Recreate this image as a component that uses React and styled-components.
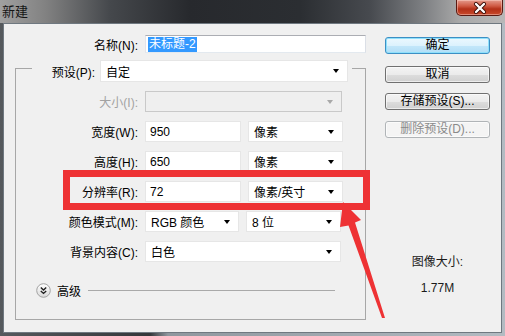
import React from 'react';
import styled, { createGlobalStyle } from 'styled-components';

const FONT = `"Liberation Sans", "Noto Sans CJK SC", sans-serif`;

const Global = createGlobalStyle`
  html, body { margin: 0; padding: 0; }
  body {
    width: 505px; height: 336px; overflow: hidden;
    font-family: ${FONT}; font-size: 12px; color: #000;
  }
  * { box-sizing: border-box; }
`;

const Window = styled.div`
  position: relative;
  width: 505px;
  height: 336px;
  display: flex;
  flex-direction: column;
  background: linear-gradient(to right, #55595d 0px, #34373a 150px, #8f979e 168px, #b3bbc2 505px);
`;

const TitleBar = styled.div`
  flex: none;
  height: 23px;
  display: flex;
  align-items: flex-start;
  justify-content: space-between;
  background: linear-gradient(to right, #a0a0a0 0px, #828282 45px, #45484c 110px, #27292d 190px, #2b2e32 300px, #474a4f 370px, #7f8184 425px, #a9a9a9 460px, #b8b8b8 505px);
`;

const Title = styled.div`
  height: 23px;
  line-height: 23px;
  padding-left: 2px;
  font-size: 13px;
  color: #151515;
`;

const CloseButton = styled.div`
  width: 47px;
  height: 16px;
  margin-right: 2px;
  border: 1px solid #5a1a12;
  border-top: none;
  border-radius: 0 0 5px 5px;
  background: linear-gradient(#e49a8c 0%, #cf5a44 40%, #b33018 60%, #c84a2c 100%);
  box-shadow: inset 0 0 0 1px rgba(255, 220, 210, 0.45);
  display: flex;
  align-items: center;
  justify-content: center;
`;

const Body = styled.div`
  position: relative;
  flex: none;
  margin: 0 3px;
  height: 310px;
  border: 1px solid #6f7880;
  background: #f0f0f0;
  display: flex;
`;

const LeftPane = styled.div`
  width: 362px;
  padding-top: 11px;
  display: flex;
  flex-direction: column;
`;

const RightPane = styled.div`
  width: 105px;
  margin-left: 19px;
  padding-top: 12px;
  display: flex;
  flex-direction: column;
  align-items: center;
`;

const Row = styled.div`
  display: flex;
  align-items: center;
  gap: ${p => p.$gap ?? 7}px;
  height: ${p => p.$h ?? 21}px;
  margin-top: ${p => p.$mt ?? 0}px;
`;

const Label = styled.span`
  flex: none;
  width: ${p => p.$w}px;
  text-align: right;
  white-space: nowrap;
  color: ${p => (p.$disabled ? '#a2a2a2' : '#000')};
`;

const NameInput = styled.div`
  width: 222px;
  height: 18px;
  border: 1px solid;
  border-color: #abadb3 #dbdfe6 #e3e9ef #e2e3ea;
  background: #fff;
  padding-left: 2px;
  display: flex;
  align-items: center;
`;

const Selected = styled.span`
  background: #3399ff;
  color: #fff;
  line-height: 15px;
  padding: 0 1px;
`;

const Field = styled.div`
  flex: none;
  width: ${p => p.$w}px;
  height: 21px;
  background: #fff;
  border: 1px solid #e6e6e6;
  padding-left: 4px;
  display: flex;
  align-items: center;
`;

const Select = styled.div`
  flex: none;
  width: ${p => p.$w}px;
  height: ${p => p.$h ?? 21}px;
  background: ${p => (p.$disabled ? '#efefef' : '#fff')};
  border: 1px solid ${p => (p.$disabled ? '#c9c9c9' : '#e6e6e6')};
  padding: 0 8px 0 5px;
  display: flex;
  align-items: center;
  justify-content: space-between;
  white-space: nowrap;
`;

const Arrow = styled.span`
  width: 0;
  height: 0;
  border-left: 3.5px solid transparent;
  border-right: 3.5px solid transparent;
  border-top: 4px solid ${p => (p.$disabled ? '#a8a8a8' : '#000')};
`;

const Group = styled.fieldset`
  margin: 1px 0 0 11px;
  width: 351px;
  padding: 9px 0 21px 0;
  border: 1px solid #a7a7a7;
  min-inline-size: auto;
  display: flex;
  flex-direction: column;
  gap: 9px;
`;

const Legend = styled.legend`
  margin-left: 16px;
  padding: 6px 4px 0 0;
`;

const AdvancedRow = styled.div`
  display: flex;
  align-items: center;
  height: 16px;
  margin: 11px 30px 0 20px;
  gap: 6px;
`;

const Etch = styled.div`
  flex: 1;
  height: 1px;
  background: #a9a9a9;
  margin-left: 1px;
`;

const Button = styled.button`
  flex: none;
  width: 105px;
  height: 17px;
  margin-top: ${p => p.$mt ?? 0}px;
  padding: 0;
  font-family: ${FONT};
  font-size: 12px;
  line-height: 15px;
  color: ${p => (p.disabled ? '#8a8a8a' : '#000')};
  border: 1px solid ${p => (p.$primary ? '#3c8fc4' : p.disabled ? '#b0b4b7' : '#707070')};
  border-radius: 3px;
  background: ${p =>
    p.$primary
      ? 'linear-gradient(#ecf8fe 0%, #dcf2fd 50%, #c3e7fa 51%, #b2def6 100%)'
      : p.disabled
      ? '#f4f4f4'
      : 'linear-gradient(#f3f3f3 0%, #ebebeb 50%, #dddddd 51%, #d0d0d0 100%)'};
  box-shadow: ${p => (p.$primary ? 'inset 0 0 0 1px #8fe0fb' : 'inset 0 0 0 1px rgba(255,255,255,0.6)')};
`;

const SizeInfo = styled.div`
  margin-top: 116px;
  display: flex;
  flex-direction: column;
  align-items: center;
  line-height: 16px;
  gap: 10px;
  color: #1a1a1a;
`;

const Annotation = styled.svg`
  position: absolute;
  left: 0;
  top: 0;
  pointer-events: none;
`;

const ChevronIcon = () => (
  <svg width="15" height="15" viewBox="0 0 15 15">
    <defs>
      <linearGradient id="cg" x1="0" y1="0" x2="0" y2="1">
        <stop offset="0" stopColor="#ffffff" />
        <stop offset="1" stopColor="#d9d9d9" />
      </linearGradient>
    </defs>
    <circle cx="7.5" cy="7.5" r="6.8" fill="url(#cg)" stroke="#a3a3a3" />
    <path d="M4.8 4.6 L7.5 7.1 L10.2 4.6 M4.8 7.9 L7.5 10.4 L10.2 7.9" fill="none" stroke="#1f1f1f" strokeWidth="1.4" />
  </svg>
);

const CloseX = () => (
  <svg width="16" height="12" viewBox="0 0 16 12">
    <path d="M4 2 L12 10 M12 2 L4 10" stroke="#3a0c06" strokeWidth="4" strokeLinecap="round" />
    <path d="M4 2 L12 10 M12 2 L4 10" stroke="#ffffff" strokeWidth="2.4" strokeLinecap="round" />
  </svg>
);

export default function App() {
  return (
    <>
      <Global />
      <Window>
        <TitleBar>
          <Title>新建</Title>
          <CloseButton>
            <CloseX />
          </CloseButton>
        </TitleBar>
        <Body>
          <LeftPane>
            <Row $h={18}>
              <Label $w={134}>名称(N):</Label>
              <NameInput>
                <Selected>未标题-2</Selected>
              </NameInput>
            </Row>
            <Group>
              <Legend>
                <Row $h={22} $gap={5}>
                  <Label $w={63}>预设(P):</Label>
                  <Select $w={248} $h={22}>
                    <span>自定</span>
                    <Arrow />
                  </Select>
                </Row>
              </Legend>
              <Row>
                <Label $w={122} $disabled>大小(I):</Label>
                <Select $w={197} $disabled>
                  <span />
                  <Arrow $disabled />
                </Select>
              </Row>
              <Row>
                <Label $w={122}>宽度(W):</Label>
                <Field $w={96}>950</Field>
                <Select $w={95}>
                  <span>像素</span>
                  <Arrow />
                </Select>
              </Row>
              <Row>
                <Label $w={122}>高度(H):</Label>
                <Field $w={96}>650</Field>
                <Select $w={95}>
                  <span>像素</span>
                  <Arrow />
                </Select>
              </Row>
              <Row>
                <Label $w={122}>分辨率(R):</Label>
                <Field $w={96}>72</Field>
                <Select $w={95}>
                  <span>像素/英寸</span>
                  <Arrow />
                </Select>
              </Row>
              <Row>
                <Label $w={122}>颜色模式(M):</Label>
                <Select $w={94}>
                  <span>RGB 颜色</span>
                  <Arrow />
                </Select>
                <Select $w={95}>
                  <span>8 位</span>
                  <Arrow />
                </Select>
              </Row>
              <Row>
                <Label $w={122}>背景内容(C):</Label>
                <Select $w={196}>
                  <span>白色</span>
                  <Arrow />
                </Select>
              </Row>
              <AdvancedRow>
                <ChevronIcon />
                <span>高级</span>
                <Etch />
              </AdvancedRow>
            </Group>
          </LeftPane>
          <RightPane>
            <Button $primary $mt={1}>确定</Button>
            <Button $mt={12}>取消</Button>
            <Button $mt={10}>存储预设(S)...</Button>
            <Button $mt={11} disabled>删除预设(D)...</Button>
            <SizeInfo>
              <span>图像大小:</span>
              <span>1.77M</span>
            </SizeInfo>
          </RightPane>
        </Body>
        <Annotation width="505" height="336" viewBox="0 0 505 336">
          <rect x="66.5" y="173.5" width="300" height="33" fill="none" stroke="#ee3234" strokeWidth="7" />
          <polygon
            points="343,202 361,220 355,222.5 385,318 382,318 348.5,225.5 340,227"
            fill="#ee3234"
          />
        </Annotation>
      </Window>
    </>
  );
}
